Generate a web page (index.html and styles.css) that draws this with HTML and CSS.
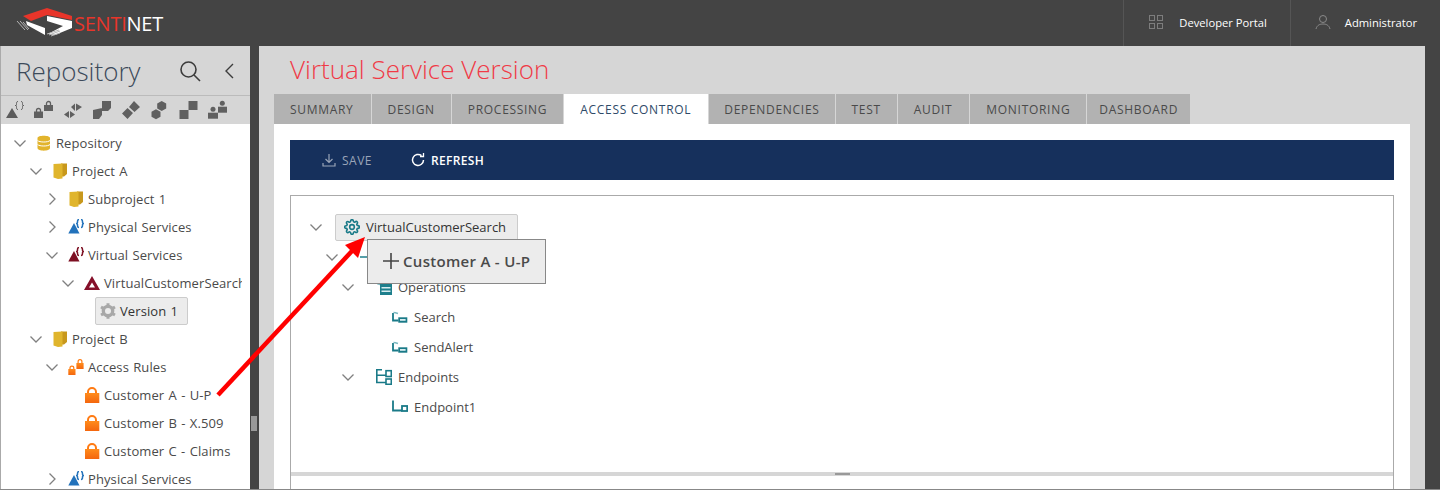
FILE: index.html
```html
<!DOCTYPE html>
<html>
<head>
	<meta charset="UTF-8">
	<title>Sentinet - Virtual Service Version</title>
	<link rel="stylesheet" href="styles.css">
</head>
<body>
	<svg class="defs" width="0" height="0">
		<defs>
			<linearGradient id="lock-fill" x1="0" y1="0" x2="0" y2="1"><stop offset="0" stop-color="#ff8c1c"/><stop offset="1" stop-color="#f4660e"/></linearGradient>
		</defs>
		<symbol id="chev-down" viewBox="0 0 12 12"><path d="M.5 3.500l5.500 5.500 5.500-5.500" fill="none" stroke="#808080" stroke-width="1.300"/></symbol>
		<symbol id="chev-right" viewBox="0 0 12 12"><path d="M3.500.5l5.500 5.500-5.500 5.500" fill="none" stroke="#808080" stroke-width="1.300"/></symbol>
		<symbol id="db" viewBox="0 0 16 16"><path d="M1.500 3C1.500 0 14 0 14 3v10c0 3.500-12.500 3.500-12.500 0z" fill="#e2b42c"/><path d="M1.500 5.500c2 2 10.500 2 12.500 0M1.500 9.500c2 2 10.500 2 12.500 0" fill="none" stroke="#fff" stroke-width="1"/></symbol>
		<symbol id="folder" viewBox="0 0 16 16"><path d="M9 .5h6V11l-3 2.500H9z" fill="#c8981c"/><path d="M1.500 1L10.500.5V15.500L6 16 1.500 14.500z" fill="#e0b52d"/></symbol>
		<symbol id="svc-blue" viewBox="0 0 16 16"><path d="M.3 14.500L6 4l5.500 10.500z" fill="#2272bb"/><path d="M11 .5c-1.500 0-1.500 1-1.500 2v1c0 1-.5 1-1.500 1 1 0 1.500 0 1.500 1v1c0 1 0 2 1.500 2M13 .5c1.500 0 1.500 1 1.500 2v1c0 1 .5 1 1.500 1-1 0-1.500 0-1.500 1v1c0 1 0 2-1.500 2" fill="none" stroke="#2272bb" stroke-width="1.500"/></symbol>
		<symbol id="svc-red" viewBox="0 0 16 16"><path d="M.3 14.500L6 4l5.500 10.500z" fill="#7d0f22"/><path d="M11 .5c-1.500 0-1.500 1-1.500 2v1c0 1-.5 1-1.500 1 1 0 1.500 0 1.500 1v1c0 1 0 2 1.500 2M13 .5c1.500 0 1.500 1 1.500 2v1c0 1 .5 1 1.500 1-1 0-1.500 0-1.500 1v1c0 1 0 2-1.500 2" fill="none" stroke="#7d0f22" stroke-width="1.500"/></symbol>
		<symbol id="tri-red" viewBox="0 0 16 16"><path fill-rule="evenodd" d="M8 1l8 14H0zM8 7.500l-3 5h6z" fill="#85102a"/></symbol>
		<symbol id="gear" viewBox="0 0 24 24"><circle cx="12" cy="12" r="3.500" fill="none" stroke="currentColor" stroke-width="2.400"/><path fill="none" stroke="currentColor" stroke-width="2.400" d="M19.4 15a1.65 1.65 0 0 0 .33 1.82l.06.06a2 2 0 0 1 0 2.83 2 2 0 0 1-2.83 0l-.06-.06a1.65 1.65 0 0 0-1.82-.33 1.65 1.65 0 0 0-1 1.51V21a2 2 0 0 1-2 2 2 2 0 0 1-2-2v-.09A1.65 1.65 0 0 0 9 19.4a1.65 1.65 0 0 0-1.82.33l-.06.06a2 2 0 0 1-2.83 0 2 2 0 0 1 0-2.83l.06-.06a1.65 1.65 0 0 0 .33-1.82 1.65 1.65 0 0 0-1.51-1H3a2 2 0 0 1-2-2 2 2 0 0 1 2-2h.09A1.65 1.65 0 0 0 4.600 9a1.65 1.65 0 0 0-.33-1.82l-.06-.06a2 2 0 0 1 0-2.83 2 2 0 0 1 2.830 0l.06.06a1.65 1.65 0 0 0 1.820.33H9a1.65 1.65 0 0 0 1-1.51V3a2 2 0 0 1 2-2 2 2 0 0 1 2 2v.09a1.65 1.65 0 0 0 1 1.510 1.65 1.65 0 0 0 1.820-.33l.06-.06a2 2 0 0 1 2.830 0 2 2 0 0 1 0 2.830l-.06.06a1.65 1.65 0 0 0-.33 1.820V9a1.65 1.65 0 0 0 1.510 1H21a2 2 0 0 1 2 2 2 2 0 0 1-2 2h-.09a1.65 1.65 0 0 0-1.510 1z"/></symbol>
		<symbol id="gear-thick" viewBox="0 0 24 24"><circle cx="12" cy="12" r="7" fill="none" stroke="#a8a8a8" stroke-width="5"/><path d="M12 .5v5M12 18.500v5M1.500 6l4.500 2.500M18 15.500l4.500 2.500M1.500 18L6 15.500M18 8.500L22.500 6" stroke="#a8a8a8" stroke-width="4.500"/></symbol>
		<symbol id="lock" viewBox="0 0 16 16"><path d="M4 7V5a4 4 0 0 1 8 0v2" fill="none" stroke="#ff7a12" stroke-width="2"/><rect x="1" y="6" width="14.300" height="10" fill="url(#lock-fill)"/></symbol>
		<symbol id="locks" viewBox="0 0 16 16"><path d="M2 10V9a1.900 1.900 0 0 1 3.800 0v1" fill="none" stroke="#ff7a12" stroke-width="1.200"/><rect x=".3" y="10" width="7.200" height="6" fill="url(#lock-fill)"/><path d="M10.100 4V2.500a1.900 1.900 0 0 1 3.800 0V4" fill="none" stroke="#ff7a12" stroke-width="1.200"/><rect x="8.400" y="4" width="7.200" height="6" fill="url(#lock-fill)"/></symbol>
		<symbol id="iface" viewBox="0 0 16 16"><path d="M0 8h16" stroke="#1e7f8c" stroke-width="1.500"/></symbol>
		<symbol id="operations" viewBox="0 0 16 16"><path d="M.5 2.500c0 2 1 3 3.500 3" fill="none" stroke="#7ab8c0" stroke-width="1.500"/><rect x="4" y="3" width="12" height="13" fill="#1e7f8c"/><rect x="5.500" y="8" width="9" height="1.500" fill="#d8edf0"/><rect x="5.500" y="11.500" width="9" height="1.500" fill="#d8edf0"/></symbol>
		<symbol id="operation" viewBox="0 0 16 16"><path d="M1 4v7.500h5.500" fill="none" stroke="#1a7a88" stroke-width="1.800"/><path d="M1.500 3.500c1.500 0 3 .5 4.500 1" fill="none" stroke="#7ab8c0" stroke-width="1.500"/><rect x="6.300" y="8.300" width="9" height="5.400" fill="#1a7a88"/><rect x="8" y="10" width="5.600" height="1.800" fill="#d8edf0"/></symbol>
		<symbol id="endpoints" viewBox="0 0 16 16"><path d="M.8 0v13.500H10M.8 6.300H10M.8.8H6" fill="none" stroke="#1a7a88" stroke-width="1.600"/><rect x="10" y="1.700" width="5.300" height="5.800" fill="none" stroke="#1a7a88" stroke-width="1.600"/><rect x="10" y="10" width="5.300" height="5.300" fill="none" stroke="#1a7a88" stroke-width="1.600"/></symbol>
		<symbol id="endpoint" viewBox="0 0 16 16"><path d="M1 1.500v10h9" fill="none" stroke="#1a7a88" stroke-width="1.800"/><rect x="10" y="7" width="5.200" height="5" fill="none" stroke="#1a7a88" stroke-width="1.800"/></symbol>
	</svg>

	<div class="topbar">
		<div class="brand">
			<svg width="58" height="30" viewBox="16 8 58 30">
				<path d="M23 16L47 8l25 8v4L47 15 31 21z" fill="#e8352a"/>
				<path d="M26 21l19 7v7L27 25zM47 16l25 5v7l-17 7-7-1 15-8-16-5z" fill="#fff"/>
				<path d="M17 21l8 9M20 21l8 9M23 22l6 7M47 34l12-4M49 35l11-4M51 36l9-3" stroke="#b5b5b5" stroke-width="1" fill="none"/>
			</svg>
			<span class="brand-name"><span class="brand-red">SENTI</span>NET</span>
		</div>
		<div class="top-links">
			<a class="top-link">
				<svg width="16" height="16" viewBox="0 0 16 16" fill="none" stroke="#7d7d7d"><rect x="1.500" y="1.500" width="5" height="5"/><rect x="9.500" y="1.500" width="5" height="5"/><rect x="1.500" y="9.500" width="5" height="5"/><rect x="9.500" y="9.500" width="5" height="5"/></svg>
				Developer Portal
			</a>
			<a class="top-link user-link">
				<svg width="16" height="16" viewBox="0 0 16 16" fill="none" stroke="#8a8a8a"><circle cx="8" cy="5" r="3.500"/><path d="M1 15c1-4 4-5 7-5s6 1 7 5"/></svg>
				Administrator
			</a>
		</div>
	</div>

	<div class="layout">
		<div class="sidebar">
			<div class="side-head">
				<h2 class="side-title">Repository</h2>
				<svg class="side-search" width="22" height="22" viewBox="0 0 22 22" fill="none" stroke="#3c3c3c" stroke-width="1.600"><circle cx="9.500" cy="9.500" r="7.500"/><path d="M15 15l6 6"/></svg>
				<svg class="side-back" width="10" height="16" viewBox="0 0 10 16" fill="none" stroke="#3c3c3c" stroke-width="1.400"><path d="M9 1L2 8l7 7"/></svg>
			</div>
			<div class="side-icons">
				<svg width="20" height="20" viewBox="0 0 20 20"><path d="M1 18L7 8l6 10z" fill="#5c5c5c"/><path d="M13 1.500c-1.500 0-1.500 1-1.500 2v1c0 1-.5 1-1.500 1 1 0 1.500 0 1.500 1v1c0 1 0 2 1.500 2M16 1.500c1.500 0 1.500 1 1.500 2v1c0 1 .5 1 1.500 1-1 0-1.500 0-1.500 1v1c0 1 0 2-1.500 2" fill="none" stroke="#5c5c5c"/></svg>
				<svg width="20" height="20" viewBox="0 0 20 20" fill="#606060"><path d="M2.500 12v-1.500a2 2 0 0 1 4 0V12M12.500 6V3.500a2 2 0 0 1 4 0V6" fill="none" stroke="#606060" stroke-width="1.300"/><rect x="0" y="11.500" width="9" height="6.500"/><rect x="10" y="5" width="9" height="6"/></svg>
				<svg width="20" height="20" viewBox="0 0 20 20" fill="#606060"><path d="M12 3.500V11L8 7zM13 3.500L19 7l-6 4zM6 11v7l-5-3.500zM7 11l5 3.500L7 18z"/></svg>
				<svg width="20" height="20" viewBox="0 0 20 20" fill="#606060"><path d="M1 10l9-2v7l-3 4H1zM10 1h9v7l-3 3h-6z" fill-rule="evenodd"/></svg>
				<svg width="20" height="20" viewBox="0 0 20 20" fill="#606060"><path d="M13 1l6 6-5.500 5L8 7zM6.500 8l5.500 5-5.500 6L1 13.500z"/></svg>
				<svg width="20" height="20" viewBox="0 0 20 20" fill="#606060"><path d="M11.700 1l4.500 2.500v5L11.700 11 7.200 8.500v-5zM6 9.300l4.500 2.500v5L6 19.300l-4.500-2.500v-5z"/></svg>
				<svg width="20" height="20" viewBox="0 0 20 20" fill="#606060"><rect x=".5" y="10" width="9" height="9"/><rect x="9.500" y="1" width="9" height="9"/></svg>
				<svg width="20" height="20" viewBox="0 0 20 20" fill="#606060"><circle cx="14.300" cy="3.300" r="2.500"/><rect x="10" y="6.700" width="9" height="6"/><circle cx="5" cy="9.300" r="2.500"/><rect x="0" y="12.700" width="10" height="6"/></svg>
			</div>
			<div class="tree">
				<div class="row d0"><svg class="chev"><use href="#chev-down"/></svg><svg class="ico"><use href="#db"/></svg><span>Repository</span></div>
				<div class="row d1"><svg class="chev"><use href="#chev-down"/></svg><svg class="ico"><use href="#folder"/></svg><span>Project A</span></div>
				<div class="row d2"><svg class="chev"><use href="#chev-right"/></svg><svg class="ico"><use href="#folder"/></svg><span>Subproject 1</span></div>
				<div class="row d2"><svg class="chev"><use href="#chev-right"/></svg><svg class="ico"><use href="#svc-blue"/></svg><span>Physical Services</span></div>
				<div class="row d2"><svg class="chev"><use href="#chev-down"/></svg><svg class="ico"><use href="#svc-red"/></svg><span>Virtual Services</span></div>
				<div class="row d3"><svg class="chev"><use href="#chev-down"/></svg><svg class="ico"><use href="#tri-red"/></svg><span>VirtualCustomerSearch</span></div>
				<div class="row d4"><span class="chev"></span><div class="picked"><svg class="ico ico-gear"><use href="#gear-thick"/></svg><span>Version 1</span></div></div>
				<div class="row d1"><svg class="chev"><use href="#chev-down"/></svg><svg class="ico"><use href="#folder"/></svg><span>Project B</span></div>
				<div class="row d2"><svg class="chev"><use href="#chev-down"/></svg><svg class="ico"><use href="#locks"/></svg><span>Access Rules</span></div>
				<div class="row d3"><span class="chev"></span><svg class="ico"><use href="#lock"/></svg><span>Customer A - U-P</span></div>
				<div class="row d3"><span class="chev"></span><svg class="ico"><use href="#lock"/></svg><span>Customer B - X.509</span></div>
				<div class="row d3"><span class="chev"></span><svg class="ico"><use href="#lock"/></svg><span>Customer C - Claims</span></div>
				<div class="row d2"><svg class="chev"><use href="#chev-right"/></svg><svg class="ico"><use href="#svc-blue"/></svg><span>Physical Services</span></div>
			</div>
		</div>

		<div class="splitter"><i></i></div>

		<div class="main">
			<h1 class="page-title">Virtual Service Version</h1>
			<div class="tabs">
				<div class="tab tab-summary">SUMMARY</div>
				<div class="tab">DESIGN</div>
				<div class="tab">PROCESSING</div>
				<div class="tab active">ACCESS CONTROL</div>
				<div class="tab tab-deps">DEPENDENCIES</div>
				<div class="tab">TEST</div>
				<div class="tab tab-audit">AUDIT</div>
				<div class="tab">MONITORING</div>
				<div class="tab tab-last">DASHBOARD</div>
			</div>
			<div class="panel">
				<div class="toolbar">
					<div class="tool disabled">
						<svg width="14" height="14" viewBox="0 0 14 14" fill="none" stroke="#9aa5b8" stroke-width="1.200"><path d="M7 1v8M3.500 6L7 9.500 10.500 6M1 10v3h12v-3"/></svg>
						SAVE
					</div>
					<div class="tool">
						<svg width="14" height="14" viewBox="0 0 14 14" fill="none" stroke="#fff" stroke-width="1.500"><path d="M12.500 7A5.500 5.500 0 1 1 10.500 2.700"/><path d="M12.500 0v3.500H9" stroke-width="1.300"/></svg>
						REFRESH
					</div>
				</div>
				<div class="box">
					<div class="box-tree">
						<div class="row2 l0"><svg class="chev"><use href="#chev-down"/></svg><div class="root-node"><svg class="ico ico-teal"><use href="#gear"/></svg><span>VirtualCustomerSearch</span></div></div>
						<div class="row2 l1"><svg class="chev"><use href="#chev-down"/></svg><svg class="ico ico-second"><use href="#iface"/></svg></div>
						<div class="row2 l2"><svg class="chev"><use href="#chev-down"/></svg><svg class="ico ico-second"><use href="#operations"/></svg><span>Operations</span></div>
						<div class="row2 l3"><svg class="ico ico-second"><use href="#operation"/></svg><span>Search</span></div>
						<div class="row2 l3"><svg class="ico ico-second"><use href="#operation"/></svg><span>SendAlert</span></div>
						<div class="row2 l2"><svg class="chev"><use href="#chev-down"/></svg><svg class="ico ico-second"><use href="#endpoints"/></svg><span>Endpoints</span></div>
						<div class="row2 l3"><svg class="ico ico-second"><use href="#endpoint"/></svg><span>Endpoint1</span></div>
					</div>
					<div class="box-split"><i></i></div>
				</div>
			</div>
		</div>
		<div class="right-edge"></div>
	</div>

	<!-- drag ghost and annotation lie over the page -->
	<div class="ghost">
		<svg width="16" height="16" viewBox="0 0 16 16" stroke="#444" stroke-width="1.600"><path d="M8 0v16M0 8h16"/></svg>
		<span>Customer A - U-P</span>
	</div>
	<svg class="pointer" width="1440" height="490" viewBox="0 0 1440 490">
		<path d="M218 395L352 251" stroke="#f00" stroke-width="4.500"/>
		<path d="M365 237L345 245 358 258z" fill="#f00"/>
	</svg>
</body>
</html>
```

FILE: styles.css
```css
html, body {
	margin: 0;
	padding: 0;
	height: 490px;
	overflow: hidden;
}
body {
	font-family: "Open Sans", "Noto Sans", sans-serif;
	font-size: 13px;
	color: #4a4a4a;
	background: #444;
	display: flex;
	flex-direction: column;
}
.defs {
	position: absolute;
}

/* top bar */
.topbar {
	height: 46px;
	flex: none;
	display: flex;
	justify-content: space-between;
	background: #444;
	color: #fff;
}
.brand {
	display: flex;
	align-items: center;
	padding-left: 16px;
}
.brand-name {
	font-size: 20px;
	font-weight: 400;
	letter-spacing: -0.25px;
}
.brand-red {
	color: #e8352a;
}
.top-links {
	display: flex;
}
.top-link {
	display: flex;
	align-items: center;
	gap: 15px;
	padding: 0 23px 2px 24px;
	border-left: 1px solid #555;
	font-size: 11.2px;
}
.user-link {
	gap: 14px;
	padding-right: 23px;
}

/* layout */
.layout {
	flex: 1;
	display: flex;
	min-height: 0;
	border-bottom: 1px solid #888;
}
.sidebar {
	width: 249px;
	flex: none;
	display: flex;
	flex-direction: column;
	border-left: 1px solid #aaa;
	background: #fff;
}
.side-head {
	height: 50px;
	flex: none;
	display: flex;
	align-items: center;
	background: #d6d6d6;
	box-sizing: border-box;
	border-bottom: 1px solid #bbb;
	padding-left: 15px;
}
.side-title {
	margin: 0;
	width: 163px;
	font-size: 26px;
	font-weight: 300;
	color: #3c4a5a;
}
.side-back {
	margin-left: 23px;
}
.side-icons {
	height: 28px;
	flex: none;
	display: flex;
	align-items: center;
	gap: 9px;
	padding-left: 4px;
	background: #d6d6d6;
}
.tree {
	flex: 1;
	overflow: hidden;
	margin-right: 8px;
	padding-top: 5px;
	letter-spacing: 0.1px;
	word-spacing: 0.8px;
}
.row {
	height: 28px;
	display: flex;
	align-items: center;
	white-space: nowrap;
}
.row .chev, .row2 .chev {
	width: 12px;
	height: 12px;
	flex: none;
}
.ico {
	width: 16px;
	height: 16px;
	flex: none;
	margin-left: 10px;
	margin-right: 4px;
}
.d0 { padding-left: 13px; }
.d1 { padding-left: 29px; }
.d2 { padding-left: 45px; }
.d3 { padding-left: 61px; }
.d4 { padding-left: 77px; }
.d4 .chev {
	display: block;
	width: 6px;
}
.picked {
	height: 26px;
	display: flex;
	align-items: center;
	padding: 0 9px 0 0;
	margin-left: 11px;
	background: #ececec;
	border: 1px solid #ccc;
	border-radius: 2px;
	color: #333;
}
.ico-gear {
	margin-left: 4px;
}

.splitter {
	width: 9px;
	flex: none;
	background: #444;
	position: relative;
}
.splitter i {
	position: absolute;
	left: 1px;
	top: 370px;
	width: 6px;
	height: 15px;
	background: #999;
}

/* main area */
.main {
	width: 1166px;
	flex: none;
	box-sizing: border-box;
	background: #d6d6d6;
	padding-left: 15px;
	padding-right: 15px;
	display: flex;
	flex-direction: column;
}
.page-title {
	margin: 0;
	height: 48px;
	padding-left: 16px;
	font-size: 26px;
	line-height: 47px;
	font-weight: 300;
	color: #f03a46;
}
.tabs {
	display: flex;
	gap: 1px;
	height: 30px;
	flex: none;
}
.tab {
	display: flex;
	align-items: center;
	padding: 0 16px;
	background: #b2b2b2;
	font-size: 12px;
	letter-spacing: 0.7px;
	color: #4a4a4a;
}
.tab.active {
	padding-right: 17px;
	background: #fff;
	color: #2f4a68;
}
.tab-summary, .tab-audit {
	padding-right: 17px;
}
.tab-deps {
	padding: 0 15px;
}
.tab-last {
	padding: 0 12px;
}
.panel {
	flex: 1;
	min-height: 0;
	background: #fff;
	padding: 16px 16px 0;
	display: flex;
	flex-direction: column;
}
.toolbar {
	height: 40px;
	flex: none;
	display: flex;
	align-items: center;
	gap: 39px;
	padding-left: 32px;
	background: #16305c;
}
.tool {
	display: flex;
	align-items: center;
	gap: 6px;
	font-size: 12px;
	font-weight: 600;
	letter-spacing: 0.35px;
	color: #fff;
}
.tool.disabled {
	font-weight: 400;
	letter-spacing: 0.5px;
	color: #9aa5b8;
}
.box {
	flex: 1;
	min-height: 0;
	margin-top: 15px;
	border: 1px solid #aaa;
	border-bottom: 0;
	display: flex;
	flex-direction: column;
}
.box-tree {
	height: 276px;
	flex: none;
	padding-top: 16px;
	box-sizing: border-box;
}
.row2 {
	height: 30px;
	display: flex;
	align-items: center;
	white-space: nowrap;
}
.l0 { padding-left: 19px; }
.l1 { padding-left: 35px; }
.l2 { padding-left: 51px; }
.l3 { padding-left: 101px; }
.ico-second {
	margin-left: 22px;
	margin-right: 6px;
}
.l3 .ico-second {
	margin-left: 0;
}
.root-node {
	height: 25px;
	display: flex;
	align-items: center;
	margin-left: 13px;
	padding-right: 11px;
	background: #ececec;
	border: 1px solid #ccc;
	border-radius: 2px;
	color: #333;
}
.ico-teal {
	color: #1a7a88;
	margin-left: 8px;
	margin-right: 6px;
}
.box-split {
	height: 4px;
	background: #d6d6d6;
	display: flex;
	justify-content: center;
	align-items: center;
}
.box-split i {
	width: 15px;
	height: 2px;
	background: #999;
}
.right-edge {
	flex: 1;
	background: #444;
}

/* overlay */
.ghost {
	position: absolute;
	left: 367px;
	top: 239px;
	width: 179px;
	height: 45px;
	box-sizing: border-box;
	display: flex;
	align-items: center;
	gap: 4px;
	padding: 0 0 2px 15px;
	background: #ececec;
	border: 1px solid #888;
	font-size: 15px;
	font-weight: 600;
	letter-spacing: 0.3px;
	color: #4a4a4a;
}
.pointer {
	position: absolute;
	left: 0;
	top: 0;
	pointer-events: none;
}
```
